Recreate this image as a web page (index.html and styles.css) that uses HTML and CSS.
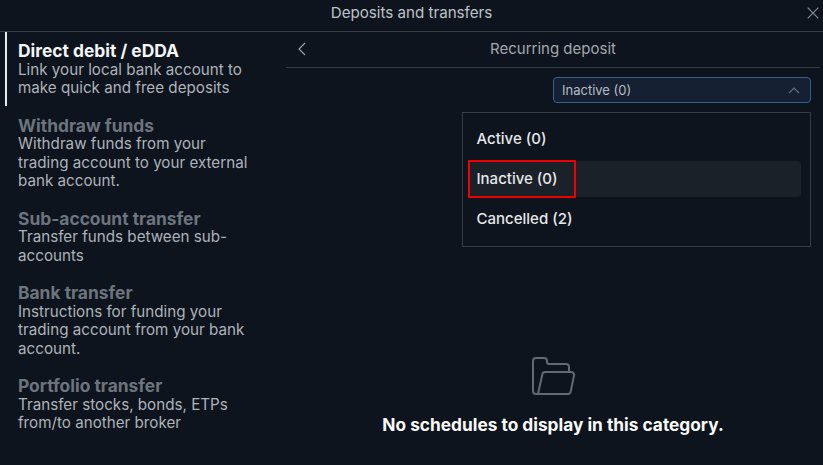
FILE: index.html
```html
<!DOCTYPE html>
<html lang="en">
<head>
<meta charset="utf-8">
<title>Deposits and transfers</title>
<link rel="stylesheet" href="styles.css">
</head>
<body>
<div class="dialog">
  <header class="topbar">
    <span class="topbar-title">Deposits and transfers</span>
    <svg class="close" width="12" height="12" viewBox="0 0 12 12"><path d="M.7.7l10.6 10.6M11.3.7L.7 11.3"/></svg>
  </header>
  <div class="body">
    <nav class="side">
      <a class="item item-active"><span class="item-title">Direct debit / eDDA</span><span class="item-desc">Link your local bank account to<br>make quick and free deposits</span></a>
      <a class="item"><span class="item-title">Withdraw funds</span><span class="item-desc">Withdraw funds from your<br>trading account to your external<br>bank account.</span></a>
      <a class="item"><span class="item-title">Sub-account transfer</span><span class="item-desc">Transfer funds between sub-<br>accounts</span></a>
      <a class="item"><span class="item-title">Bank transfer</span><span class="item-desc">Instructions for funding your<br>trading account from your bank<br>account.</span></a>
      <a class="item"><span class="item-title">Portfolio transfer</span><span class="item-desc">Transfer stocks, bonds, ETPs<br>from/to another broker</span></a>
    </nav>
    <main class="main">
      <div class="subhead">
        <svg class="back" width="8" height="14" viewBox="0 0 8 14"><path d="M7 1L1 7l6 6"/></svg>
        <span class="subhead-title">Recurring deposit</span>
      </div>
      <div class="filter">
        <button class="select">
          <span>Inactive (0)</span>
          <svg class="caret" width="12" height="7" viewBox="0 0 12 7"><path d="M1 6l5-5 5 5"/></svg>
        </button>
        <ul class="menu">
          <li class="option">Active (0)</li>
          <li class="option option-hover">Inactive (0)<span class="callout"></span></li>
          <li class="option">Cancelled (2)</li>
        </ul>
      </div>
      <div class="empty">
        <svg class="folder" width="43" height="38" viewBox="0 0 43 38"><path d="M6 37H4a3 3 0 0 1-3-3V4a3 3 0 0 1 3-3h8a3 3 0 0 1 3 3v1a2 2 0 0 0 2 2h17a3 3 0 0 1 3 3v5M6 37l4.300-19.500A3 3 0 0 1 13.200 15H39a3 3 0 0 1 3 3.600l-3.300 16a3 3 0 0 1-3 2.400z"/></svg>
        <p class="empty-text">No schedules to display in this category.</p>
      </div>
    </main>
  </div>
</div>
</body>
</html>
```
FILE: styles.css
```css
* { box-sizing: border-box; }
html, body { margin: 0; height: 100%; }
body { background: #0d141d; font-family: Inter, "Liberation Sans", sans-serif; overflow: hidden; }
.dialog { width: 823px; height: 465px; display: flex; flex-direction: column; }
.topbar { height: 32px; flex: none; border-bottom: 1px solid #373d45; display: flex; align-items: center; justify-content: center; position: relative; padding-bottom: 6px; }
.topbar-title { font-size: 15.150px; color: #bfc3c8; }
.close { position: absolute; right: 4px; top: 7px; }
.close path { stroke: #8b9097; stroke-width: 1.1; fill: none; }
.body { flex: 1; display: flex; min-height: 0; }
.side { width: 286px; flex: none; padding-left: 5px; display: flex; flex-direction: column; gap: 18.200px; }
.item { display: block; padding: 9px 0 9px 11px; margin: -9px 0; border-left: 2px solid transparent; }
.item-active { border-left-color: #e8eaec; margin-top: 0; padding-top: 9px; padding-bottom: 9px; }
.item-title { display: block; font-size: 17.400px; line-height: 19.600px; font-weight: 650; color: #6c747e; }
.item-active .item-title { color: #f4f5f6; font-weight: 700; }
.item-desc { display: block; font-size: 15.200px; line-height: 18.400px; color: #aeb3b9; }
.main { flex: 1; margin-right: 3px; display: flex; flex-direction: column; min-width: 0; }
.subhead { height: 36px; flex: none; border-bottom: 1px solid #373d45; display: flex; align-items: center; justify-content: center; position: relative; padding-bottom: 2px; }
.subhead-title { font-size: 15px; color: #a3a8ae; }
.back { position: absolute; left: 12px; top: 10px; }
.back path, .caret path { stroke: #9aa0a6; stroke-width: 1.200; fill: none; }
.filter { position: relative; display: flex; justify-content: flex-end; padding: 9px 9px 0 0; }
.select { width: 258px; height: 26px; background: #152033; border: 1.500px solid #34608f; border-radius: 4px; display: flex; align-items: center; justify-content: space-between; padding: 0 10px 0 8px; font: 13px Inter, "Liberation Sans", sans-serif; color: #b7bcc2; }
.caret path { stroke: #5c7088; }
.menu { position: absolute; right: 9px; top: 44px; width: 349px; height: 135px; margin: 0; padding: 8px 9px 0 5px; list-style: none; border: 1px solid #373d45; background: #0d141d; display: flex; flex-direction: column; gap: 4px; }
.option { height: 36px; padding: 0 0 2px 8.500px; display: flex; align-items: center; position: relative; font-size: 15px; font-weight: 500; color: #e6e8ea; border-radius: 4px; }
.option-hover { background: #1a2129; }
.callout { position: absolute; left: 0; top: -1px; width: 108px; height: 38px; border: 2px solid #f00000; }
.empty { margin-top: 254px; display: flex; flex-direction: column; align-items: center; }
.folder path { stroke: #636a73; stroke-width: 2; fill: none; stroke-linejoin: round; }
.empty-text { margin: 20px 0 0; font-size: 17.300px; line-height: 20px; font-weight: 700; color: #fafafa; }
```
